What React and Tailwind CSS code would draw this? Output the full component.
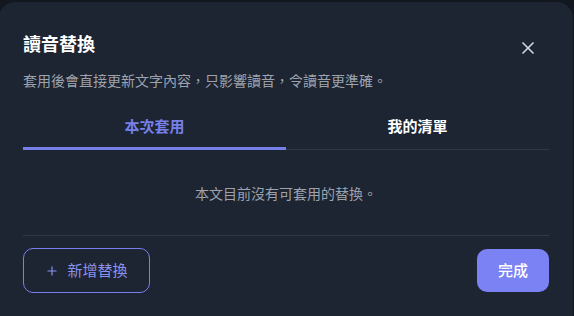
import { X, Plus } from 'lucide-react'

const font = { fontFamily: '"Noto Sans CJK TC", "Noto Sans", sans-serif' }

export default function App() {
  return (
    <div className="w-[574px] h-[316px] overflow-hidden bg-[#131820] pt-[2px]" style={font}>
      <div className="ml-[-1px] w-[574px] h-[330px] rounded-2xl bg-[#1d2432] px-6 pt-[27px]">
        <div className="flex h-7 items-start justify-between">
          <h1 className="text-lg leading-7 font-bold text-white">讀音替換</h1>
          <button className="mt-[9px] mr-[11px] flex text-[#d1d5db]">
            <X size={20} strokeWidth={2} />
          </button>
        </div>
        <p className="mt-[13px] text-sm leading-5 text-[#9ca3af]">
          套用後會直接更新文字內容，只影響讀音，令讀音更準確。
        </p>

        <div className="mt-[24px] grid grid-cols-2 border-b border-[#303848]">
          <button className="-mb-px pb-[9px] border-b-[3px] border-[#7680e8] text-[15px] leading-6 font-bold text-[#7680e8]">
            本次套用
          </button>
          <button className="-mb-px pb-[9px] border-b-[3px] border-transparent text-[15px] leading-6 font-bold text-white">
            我的清單
          </button>
        </div>

        <div className="pt-[33px] pb-[32px] border-b border-[#303848] text-center text-sm leading-5 text-[#9ca3af]">
          本文目前沒有可套用的替換。
        </div>

        <div className="flex items-center justify-between pt-3">
          <button className="flex h-[45px] w-[127px] items-center justify-center gap-2 rounded-[10px] border border-[#7780ee] text-[15px] text-[#8a92f0]">
            <Plus size={14} strokeWidth={2} />
            新增替換
          </button>
          <button className="h-[43px] w-[72px] rounded-[10px] bg-[#7a82f4] text-[15px] font-medium text-white">
            完成
          </button>
        </div>
      </div>
    </div>
  )
}
